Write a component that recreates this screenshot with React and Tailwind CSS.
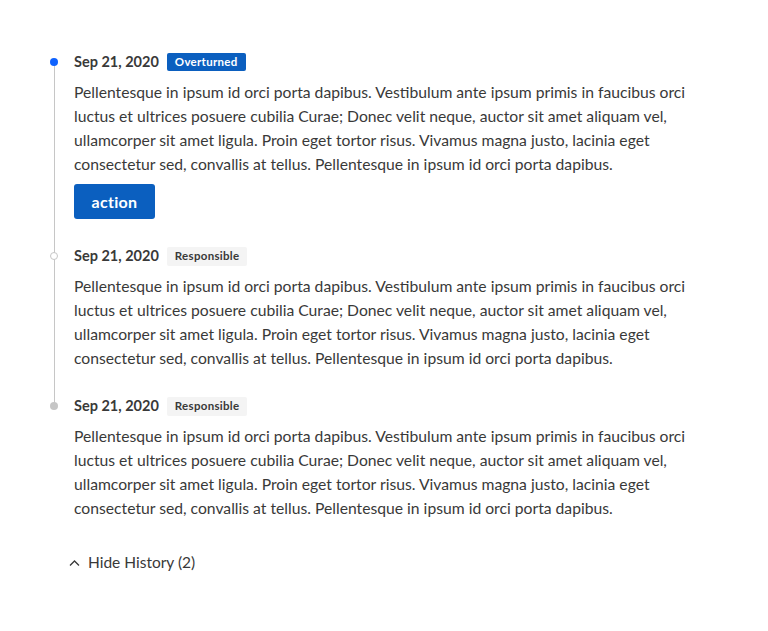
import React from "react";

const BODY =
  "Pellentesque in ipsum id orci porta dapibus. Vestibulum ante ipsum primis in faucibus orci luctus et ultrices posuere cubilia Curae; Donec velit neque, auctor sit amet aliquam vel, ullamcorper sit amet ligula. Proin eget tortor risus. Vivamus magna justo, lacinia eget consectetur sed, convallis at tellus. Pellentesque in ipsum id orci porta dapibus.";

const ITEMS = [
  { id: 1, date: "Sep 21, 2020", tag: "Overturned", dot: "active", action: true, space: "pb-[27px]" },
  { id: 2, date: "Sep 21, 2020", tag: "Responsible", dot: "open", space: "pb-[26px]" },
  { id: 3, date: "Sep 21, 2020", tag: "Responsible", dot: "done", space: "" },
];

function Dot({ kind }) {
  if (kind === "active") return <span className="relative z-10 block w-2 h-2 rounded-full bg-[#0f62fe]" />;
  if (kind === "open") return <span className="relative z-10 block w-2 h-2 rounded-full bg-white border border-[#c6c6c6]" />;
  return <span className="relative z-10 block w-2 h-2 rounded-full bg-[#c6c6c6]" />;
}

function Item({ item, last }) {
  return (
    <li className="flex gap-[10px]">
      <div className="relative w-5 shrink-0">
        <div className="h-5 flex items-center justify-center">
          <Dot kind={item.dot} />
        </div>
        {!last && <div className="absolute left-[9.5px] top-[10px] -bottom-[10px] w-px bg-[#c6c6c6]" />}
      </div>
      <div className={`w-[630px] ${item.space}`}>
        <div className="h-5 flex items-center gap-2">
          <span className="text-[14.5px] font-bold text-[#393939]">{item.date}</span>
          {item.tag === "Overturned" ? (
            <span className="h-[18px] px-[8px] flex items-center rounded-[2px] bg-[#0b5fbf] text-white text-[11.5px] font-bold tracking-[0.3px]">
              {item.tag}
            </span>
          ) : (
            <span className="h-[19px] px-[8px] flex items-center rounded-[2px] bg-[#f4f4f4] text-[#393939] text-[11.5px] font-bold tracking-[0.3px]">
              {item.tag}
            </span>
          )}
        </div>
        <p className="mt-[8px] text-[15.7px] leading-6 text-[#393939]">{BODY}</p>
        {item.action && (
          <button className="mt-2 h-[35px] w-[81px] rounded-[3px] bg-[#0b5fbf] text-white text-[16px] font-bold tracking-[0.3px]">
            action
          </button>
        )}
      </div>
    </li>
  );
}

export default function App() {
  return (
    <div className="min-h-screen bg-white pt-[52px] px-[44px]" style={{ fontFamily: "Lato, 'Liberation Sans', sans-serif" }}>
      <ol>
        {ITEMS.map((it, i) => (
          <Item key={it.id} item={it} last={i === ITEMS.length - 1} />
        ))}
      </ol>
      <button className="mt-[32px] ml-[25px] h-[22px] flex items-center gap-[8px] text-[15.5px] text-[#393939]">
        <svg width="11" height="11" viewBox="0 0 11 11" fill="none" stroke="#393939" strokeWidth="1.3">
          <path d="M1 7.5 L5.5 3 L10 7.5" />
        </svg>
        Hide History (2)
      </button>
    </div>
  );
}
